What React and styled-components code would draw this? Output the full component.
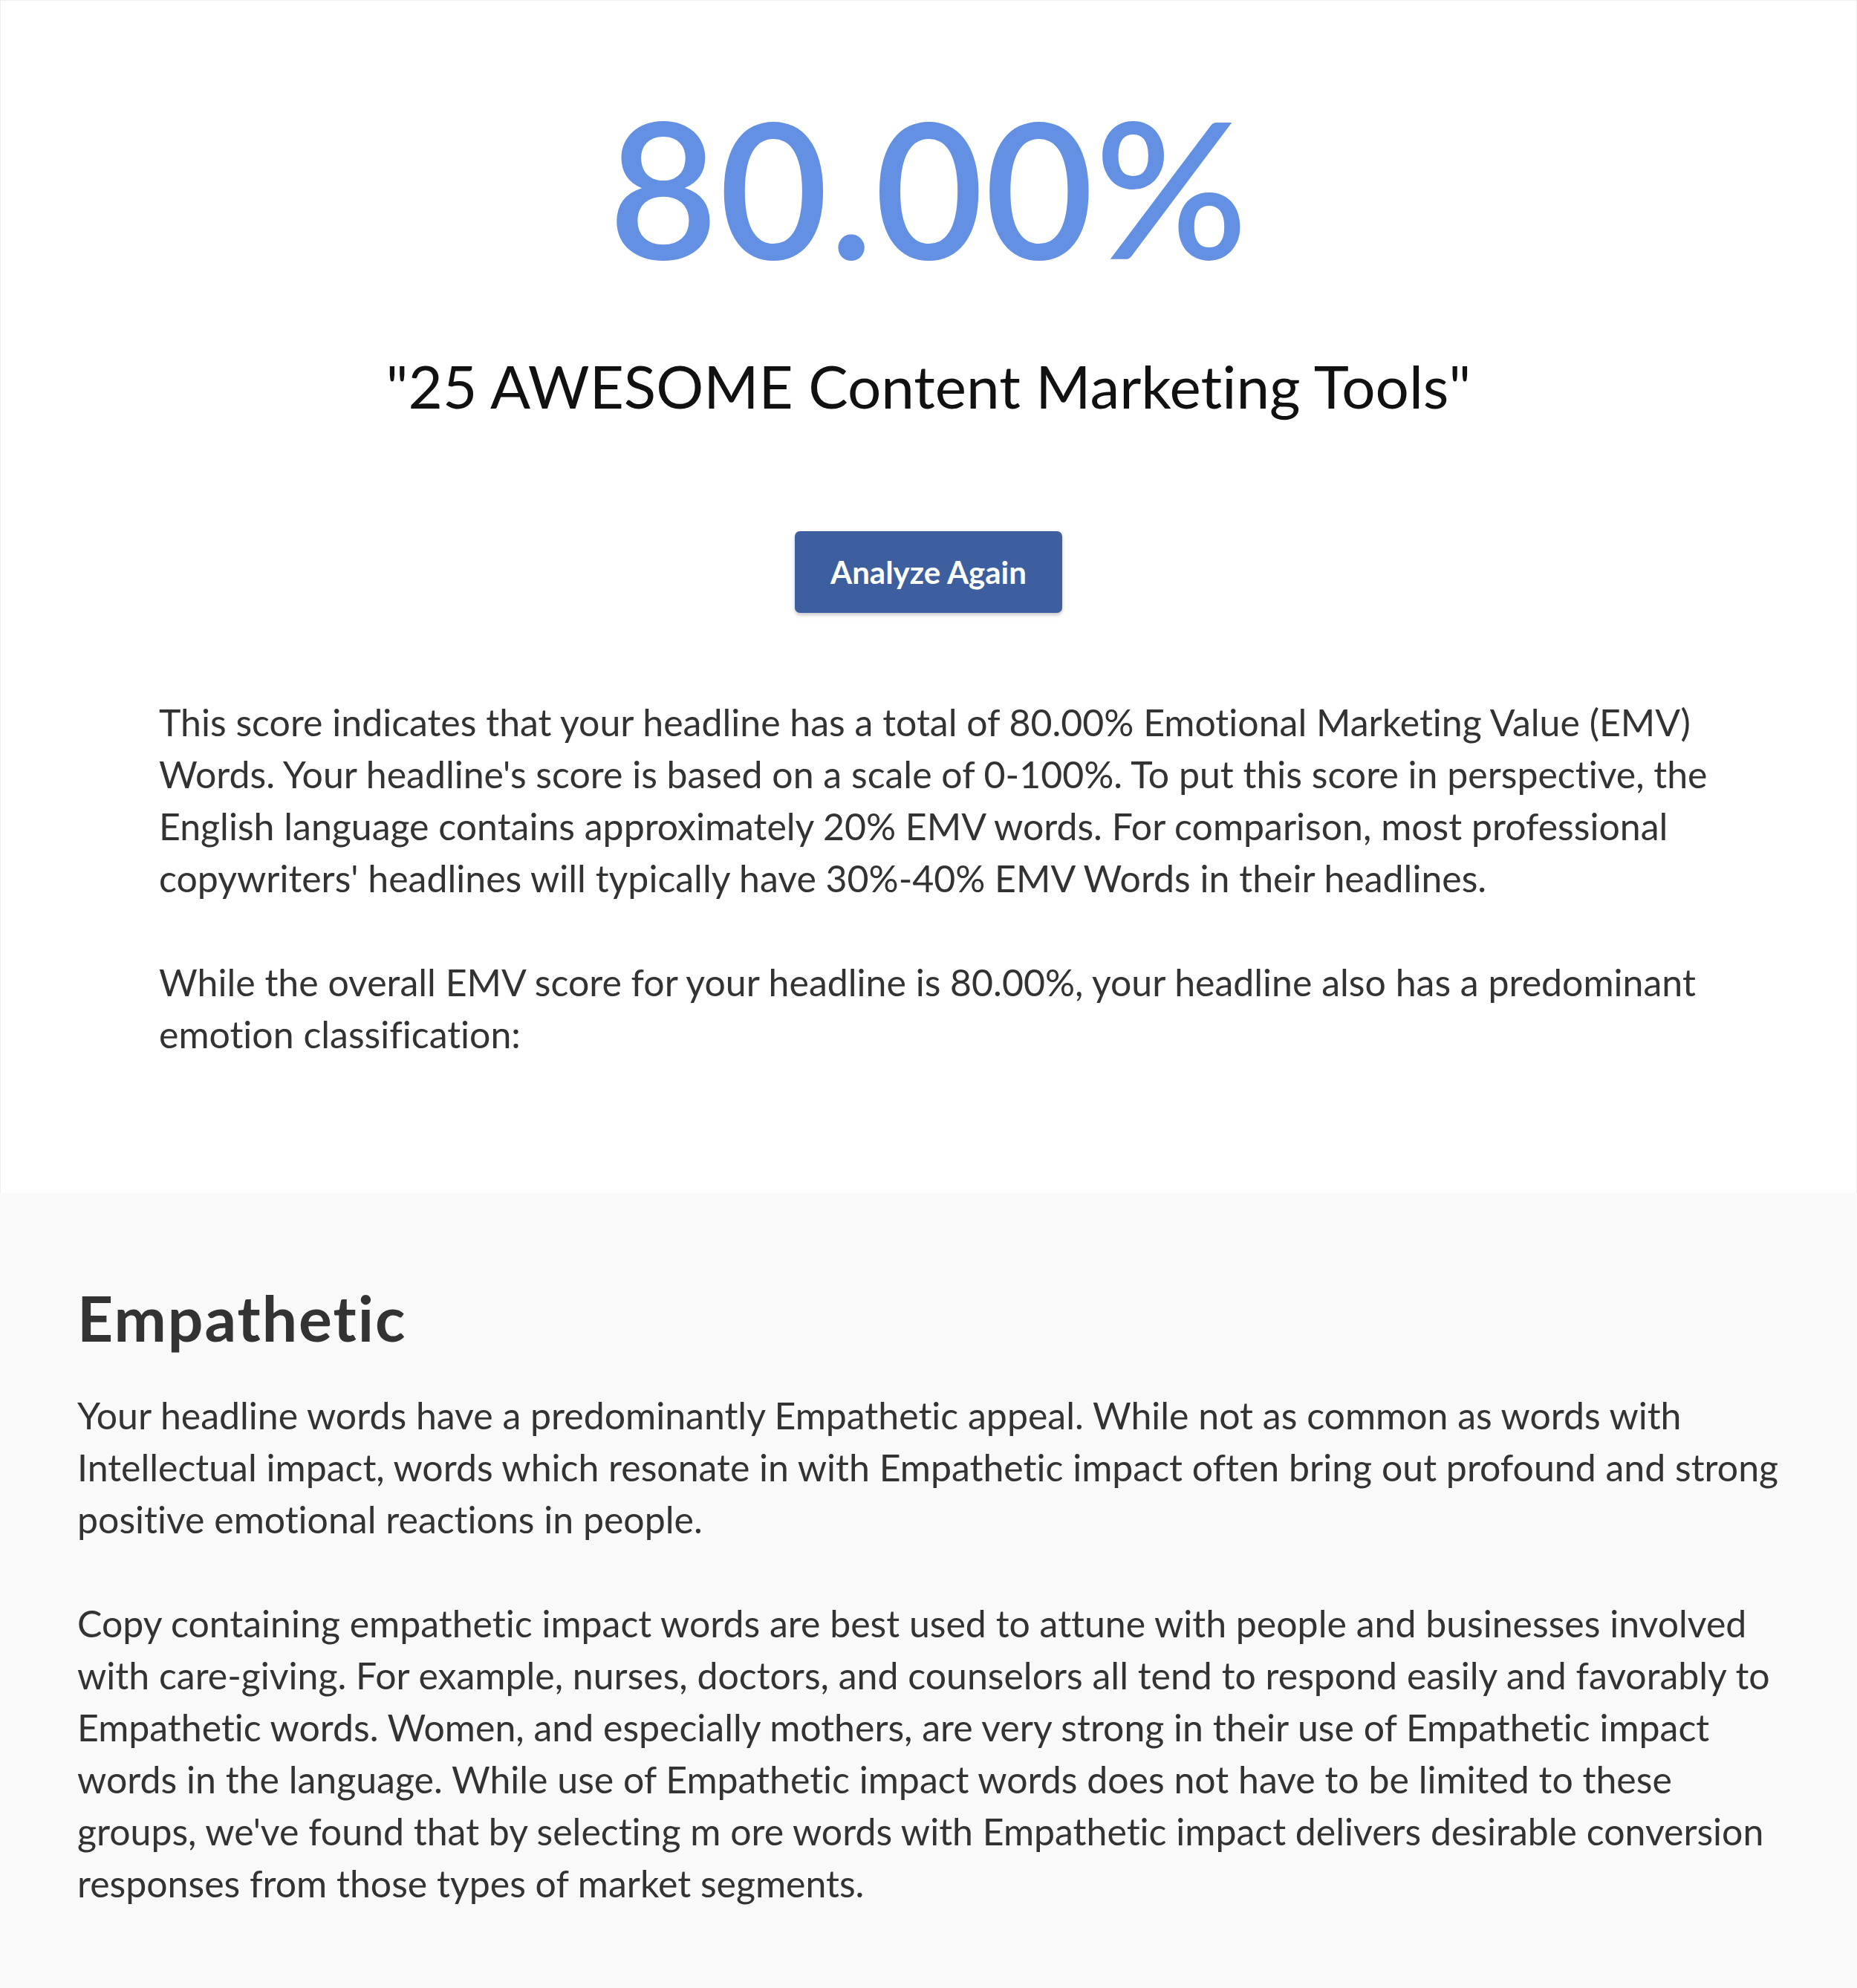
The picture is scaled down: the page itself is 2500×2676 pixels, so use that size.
import React from "react";
import styled, { createGlobalStyle } from "styled-components";

const GlobalStyle = createGlobalStyle`
	html,
	body {
		margin: 0;
		padding: 0;
		background: #f9f9f9;
	}
	body {
		font-family: "Lato", "Liberation Sans", sans-serif;
		font-variant-ligatures: none;
		color: #333333;
		-webkit-font-smoothing: antialiased;
	}
`;

const result = {
	score: "80.00%",
	headline: "25 AWESOME Content Marketing Tools",
	emotion: "Empathetic",
};

function App() {
	return (
		<React.Fragment>
			<GlobalStyle />
			<Page>
				<ScoreSection>
					<Score>{result.score}</Score>
					<Headline>"{result.headline}"</Headline>
					<AgainButton type='button'>Analyze Again</AgainButton>
					<Summary>
						<Paragraph>
							This score indicates that your headline has a total of {result.score} Emotional Marketing Value (EMV) Words. Your
							headline's score is based on a scale of 0-100%. To put this score in perspective, the English language contains
							approximately 20% EMV words. For comparison, most professional copywriters' headlines will typically have 30%-40%
							EMV Words in their headlines.
						</Paragraph>
						<Paragraph>
							While the overall EMV score for your headline is {result.score}, your headline also has a predominant emotion
							classification:
						</Paragraph>
					</Summary>
				</ScoreSection>
				<EmotionSection>
					<EmotionTitle>{result.emotion}</EmotionTitle>
					<Paragraph>
						Your headline words have a predominantly Empathetic appeal. While not as common as words with Intellectual impact,
						words which resonate in with Empathetic impact often bring out profound and strong positive emotional reactions in
						people.
					</Paragraph>
					<Paragraph>
						Copy containing empathetic impact words are best used to attune with people and businesses involved with
						care-giving. For example, nurses, doctors, and counselors all tend to respond easily and favorably to Empathetic
						words. Women, and especially mothers, are very strong in their use of Empathetic impact words in the language. While
						use of Empathetic impact words does not have to be limited to these groups, we've found that by selecting m ore words
						with Empathetic impact delivers desirable conversion responses from those types of market segments.
					</Paragraph>
				</EmotionSection>
			</Page>
		</React.Fragment>
	);
}

export default App;

const Page = styled.div`
	width: 100%;
	min-height: 2676px;
	display: flex;
	flex-direction: column;
	background: #f9f9f9;
`;

const ScoreSection = styled.section`
	display: flex;
	flex-direction: column;
	align-items: center;
	background: #ffffff;
	border: 1px solid #efefef;
	border-bottom: none;
	padding: 125px 0 179px;
	box-sizing: border-box;
`;

const Score = styled.div`
	font-size: 254px;
	font-weight: 600;
	line-height: 250px;
	letter-spacing: 1px;
	color: #6490e3;
`;

const Headline = styled.h2`
	margin: 95px 0 0;
	font-size: 80px;
	font-weight: 400;
	line-height: 96px;
	color: #111111;
`;

const AgainButton = styled.button`
	display: inline-flex;
	align-items: center;
	justify-content: center;
	height: 110px;
	margin-top: 148px;
	padding: 0 48px;
	border: none;
	border-radius: 7px;
	background: #3d5fa0;
	box-shadow: 0 3px 5px rgba(0, 0, 0, 0.22);
	font-family: "Lato", "Liberation Sans", sans-serif;
	font-size: 42px;
	font-weight: 700;
	color: #ffffff;
	cursor: pointer;
`;

const Summary = styled.div`
	align-self: stretch;
	margin-top: 112px;
	padding: 0 180px 0 213px;
`;

const Paragraph = styled.p`
	margin: 0 0 70px;
	font-size: 50px;
	line-height: 70px;
	color: #333333;

	&:last-child {
		margin-bottom: 0;
	}
`;

const EmotionSection = styled.section`
	flex: 1;
	padding: 118px 100px 105px 104px;
	background: #f9f9f9;
`;

const EmotionTitle = styled.h3`
	margin: 0 0 46px;
	font-size: 84px;
	font-weight: 700;
	line-height: 100px;
	letter-spacing: 2px;
	color: #333333;
`;
